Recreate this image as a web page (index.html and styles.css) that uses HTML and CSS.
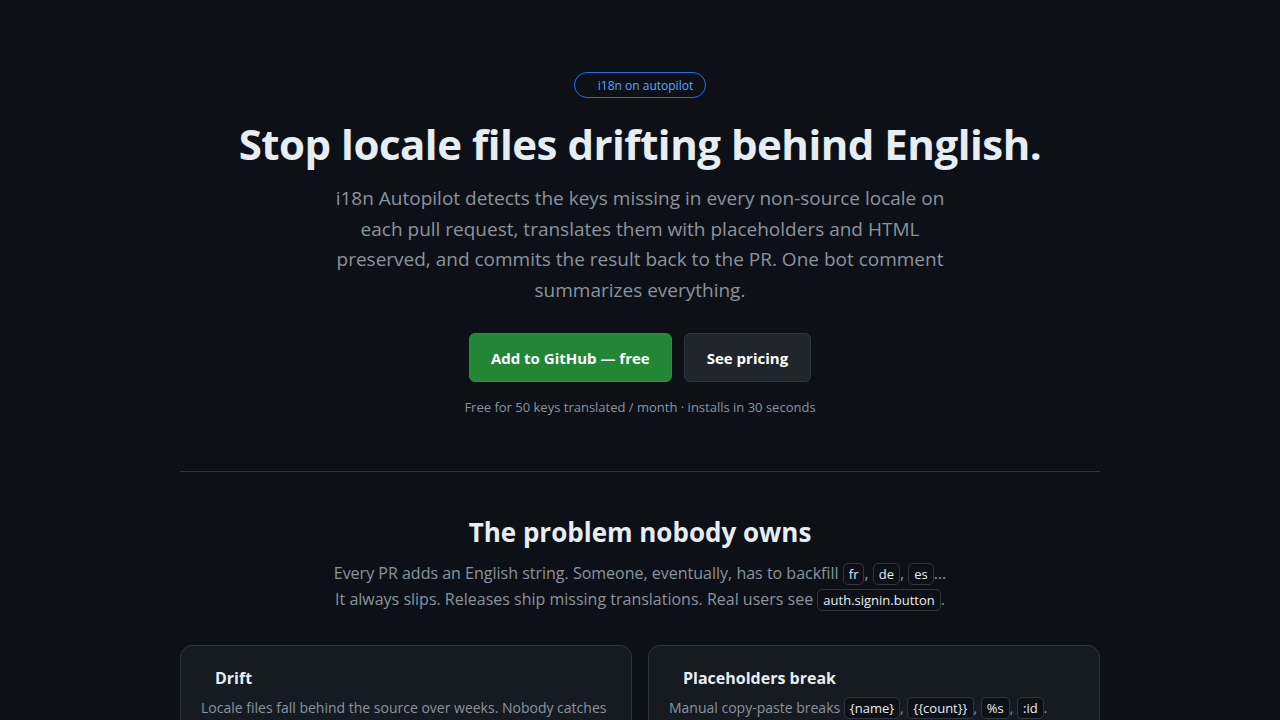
FILE: index.html
```html
<!DOCTYPE html>
<html lang="en">
  <head>
    <meta charset="utf-8" />
    <title>i18n Autopilot</title>
    <meta name="viewport" content="width=device-width, initial-scale=1" />
    <link rel="stylesheet" href="styles.css">
  </head>
  <body>
    <main class="page">
      <section class="hero">
        <span class="badge"><span class="emoji"></span>i18n on autopilot</span>
        <h1>Stop locale files drifting behind English.</h1>
        <p class="lead">
          i18n Autopilot detects the keys missing in every non-source locale on
          each pull request, translates them with placeholders and HTML
          preserved, and commits the result back to the PR. One bot comment
          summarizes everything.
        </p>
        <div class="actions">
          <a class="btn btn-primary" href="#">Add to GitHub — free</a>
          <a class="btn btn-secondary" href="#">See pricing</a>
        </div>
        <p class="fine">Free for 50 keys translated / month · installs in 30 seconds</p>
      </section>

      <hr class="rule" />

      <section class="problem">
        <h2>The problem nobody owns</h2>
        <p class="sub">
          Every PR adds an English string. Someone, eventually, has to backfill
          <code>fr</code>, <code>de</code>, <code>es</code>…<br />
          It always slips. Releases ship missing translations. Real users see
          <code>auth.signin.button</code>.
        </p>
        <div class="cards">
          <div class="card">
            <h3><span class="emoji"></span>Drift</h3>
            <p>Locale files fall behind the source over weeks. Nobody catches
              it until a customer files a bug in their own language.</p>
          </div>
          <div class="card">
            <h3><span class="emoji"></span>Placeholders break</h3>
            <p>Manual copy-paste breaks <code>{name}</code>, <code>{{count}}</code>,
              <code>%s</code>, <code>:id</code>. Runtime errors follow.</p>
          </div>
        </div>
      </section>
    </main>
  </body>
</html>
```

FILE: styles.css
```css
* {
  box-sizing: border-box;
}
body {
  margin: 0;
  background: #0d1117;
  color: #e6edf3;
  font-family: "Open Sans", "Noto Sans", sans-serif;
}
.page {
  width: 920px;
  margin: 0 auto;
  padding-top: 72px;
}
.hero {
  display: flex;
  flex-direction: column;
  align-items: center;
  text-align: center;
}
.badge {
  display: inline-flex;
  align-items: center;
  height: 26px;
  padding: 0 12px 0 11px;
  border: 1px solid #1f6feb;
  border-radius: 13px;
  color: #58a6ff;
  font-size: 12px;
}
.emoji {
  display: inline-block;
  width: 12px;
}
h1 {
  margin: 16px 0 0;
  font-size: 42px;
  line-height: 60px;
  font-weight: 700;
  letter-spacing: -0.5px;
}
.lead {
  width: 620px;
  margin: 9px 0 0;
  color: #8b949e;
  font-size: 19px;
  line-height: 30.6px;
}
.actions {
  display: flex;
  gap: 12px;
  margin-top: 28px;
}
.btn {
  display: inline-flex;
  align-items: center;
  height: 49px;
  padding: 0 21px;
  border-radius: 6px;
  font-size: 15px;
  font-weight: 700;
  color: #ffffff;
  text-decoration: none;
}
.btn-primary {
  background: #238636;
  border: 1px solid #2a9040;
}
.btn-secondary {
  padding: 0 22px;
  background: #21262d;
  border: 1px solid #30363d;
}
.fine {
  margin: 16px 0 0;
  color: #8b949e;
  font-size: 13px;
}
.rule {
  margin: 55px 0 0;
  border: 0;
  border-top: 1px solid #30363d;
}
.problem {
  text-align: center;
  padding-top: 40px;
}
h2 {
  margin: 0;
  font-size: 26px;
  line-height: 40px;
  font-weight: 700;
}
.sub {
  margin: 8px 0 0;
  color: #8b949e;
  font-size: 16px;
  line-height: 26px;
}
code {
  display: inline-block;
  padding: 0 5px;
  border: 1px solid #30363d;
  border-radius: 5px;
  background: #0d1117;
  color: #e6edf3;
  font-family: "Open Sans", "Noto Sans", sans-serif;
  font-size: 13px;
  line-height: 20px;
}
.cards {
  display: grid;
  grid-template-columns: 1fr 1fr;
  gap: 16px;
  margin-top: 33px;
  text-align: left;
}
.card {
  background: #161b22;
  border: 1px solid #30363d;
  border-radius: 12px;
  padding: 19px 20px 24px;
}
.card h3 {
  margin: 0;
  font-size: 16px;
  line-height: 26px;
  font-weight: 700;
}
.card h3 .emoji {
  width: 14px;
}
.card p {
  margin: 5px 0 0;
  color: #8b949e;
  font-size: 14px;
  line-height: 24px;
}
```
